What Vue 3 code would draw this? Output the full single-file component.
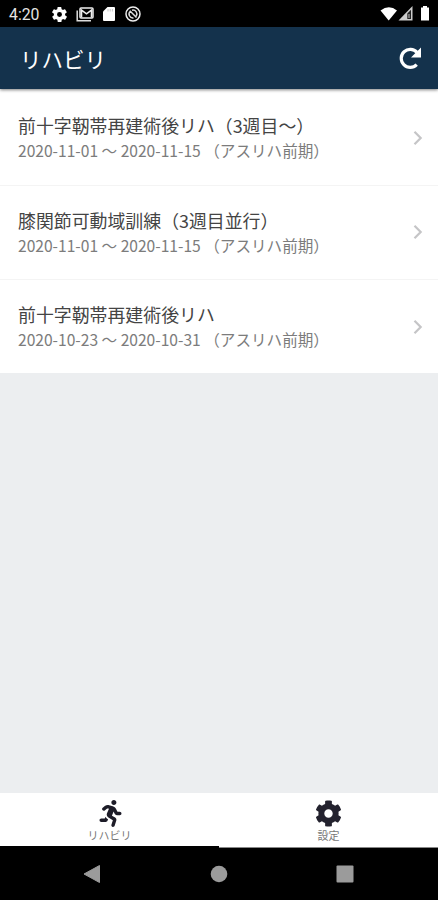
<script setup>
const plans = [
  { title: '前十字靭帯再建術後リハ（3週目〜）', from: '2020-11-01', to: '2020-11-15', phase: '（アスリハ前期）' },
  { title: '膝関節可動域訓練（3週目並行）', from: '2020-11-01', to: '2020-11-15', phase: '（アスリハ前期）' },
  { title: '前十字靭帯再建術後リハ', from: '2020-10-23', to: '2020-10-31', phase: '（アスリハ前期）' },
]
</script>

<template>
  <div class="screen">
    <div class="status">
      <span class="clock">4:20</span>
      <svg class="s-gear" viewBox="2 2 20 20"><path fill="#fff" fill-rule="evenodd" d="M19.4 13a7.5 7.5 0 0 0 0-2l2.1-1.6a.5.5 0 0 0 .1-.6l-2-3.5a.5.5 0 0 0-.6-.2l-2.5 1a7.3 7.3 0 0 0-1.7-1l-.4-2.6a.5.5 0 0 0-.5-.5h-4a.5.5 0 0 0-.5.4l-.4 2.7a7.7 7.7 0 0 0-1.7 1l-2.5-1a.5.5 0 0 0-.6.2l-2 3.5a.5.5 0 0 0 .1.6L4.6 11a7.5 7.5 0 0 0 0 2l-2.1 1.6a.5.5 0 0 0-.1.6l2 3.5c.1.2.4.3.6.2l2.5-1a7.3 7.3 0 0 0 1.7 1l.4 2.6c0 .3.2.5.5.5h4c.2 0 .5-.2.5-.4l.4-2.7a7.7 7.7 0 0 0 1.7-1l2.5 1c.2.1.5 0 .6-.2l2-3.5a.5.5 0 0 0-.1-.6zM12 15.3a3.3 3.3 0 1 1 0-6.6 3.3 3.3 0 0 1 0 6.6z"/></svg>
      <svg class="s-mail" viewBox="0 0 18 15"><path d="M1.200 3.500v10.300H15" fill="none" stroke="#ddd" stroke-width="1.500"/><rect x="4" y="1" width="13" height="10" rx="1" fill="none" stroke="#eee" stroke-width="1.500"/><path d="M5.500 10.500V3l5 3.800 5-3.800v7.500" fill="none" stroke="#eee" stroke-width="1.600"/></svg>
      <svg class="s-card" viewBox="0 0 12 14"><path d="M4.500 0H11q1 0 1 1v12q0 1-1 1H1q-1 0-1-1V4.500z" fill="#fff"/><path d="M5 2v2.500M7.200 2v2.500M9.400 2v2.500" stroke="#bbb" stroke-width=".8"/></svg>
      <svg class="s-sync" viewBox="0 0 16 16"><circle cx="8" cy="8" r="7" fill="none" stroke="#eee" stroke-width="1.500"/><path d="M5.300 5.200A3.900 3.900 0 0 0 8.500 11.900M7 4.200a3.900 3.900 0 0 1 4.300 5.800M4.800 4.800l6.700 6.700" fill="none" stroke="#ddd" stroke-width="1.500"/></svg>
      <span class="fill"></span>
      <svg class="s-right" viewBox="0 0 50 16"><path d="M.5 4.500Q9 -2 17 4.500L8.700 14.500z" fill="#fff"/><path d="M32.500 0v14.500H18.500z" fill="#ccc"/><path d="M27.300 7.500 31 3.800v9.200h-3.700z" fill="#222"/><path d="M29 8v4" stroke="#aaa" stroke-width="1.200"/><path d="M43 0h4v1.500h2V14.500h-8V1.500h2z" fill="#fff"/></svg>
    </div>
    <header class="bar">
      <h1>リハビリ</h1>
      <svg class="reload" viewBox="0 0 24 24"><path d="M18.700 18.600A9 9 0 1 1 19 6.400" fill="none" stroke="#fff" stroke-width="3.200"/><path d="M23 1.500v10H13l3.700-3.700L20 4.500z" fill="#fff"/></svg>
    </header>
    <main>
      <div class="list">
        <div v-for="(p, i) in plans" :key="i" class="row">
          <div class="info">
            <div class="title">{{ p.title }}</div>
            <div class="sub">{{ p.from }} 〜 {{ p.to }} {{ p.phase }}</div>
          </div>
          <svg class="chev" viewBox="0 0 10 16"><path d="M1.500 1.700 7.700 8l-6.200 6.300" fill="none" stroke="#c5c5c7" stroke-width="2.200"/></svg>
        </div>
      </div>
    </main>
    <nav class="tabs">
      <div class="tab active">
        <svg class="run" viewBox="0 0 416 512"><path fill="#1d1c28" d="M272 96c26.510 0 48-21.490 48-48S298.510 0 272 0s-48 21.490-48 48 21.490 48 48 48zM113.690 317.470l-14.800 34.520H32c-17.670 0-32 14.330-32 32s14.330 32 32 32h77.450c19.250 0 36.580-11.440 44.110-29.090l8.790-20.520-10.670-6.300c-17.320-10.230-30.060-25.370-37.990-42.610zM384 223.990h-44.030l-26.060-53.250c-12.500-25.550-35.450-44.230-61.780-50.940l-71.080-21.140c-28.300-6.800-57.770-.550-80.840 17.140l-39.670 30.410c-14.030 10.750-16.690 30.830-5.940 44.860s30.840 16.690 44.860 5.940l39.670-30.410c7.670-5.890 17.440-8 25.270-6.140l14.700 4.370-37.460 87.390c-12.620 29.480-1.310 64.010 26.300 80.310l84.980 50.170-27.470 87.730c-5.280 16.860 4.110 34.820 20.970 40.100 3.190 1 6.410 1.480 9.580 1.480 13.610 0 26.230-8.770 30.520-22.450l31.640-101.060c5.910-20.770-2.890-43.080-21.640-54.390l-61.240-36.140 31.310-78.280 20.270 41.430c8 16.340 24.920 26.890 43.110 26.890H384c17.670 0 32-14.330 32-32s-14.330-31.990-32-31.990z"/></svg>
        <span>リハビリ</span>
      </div>
      <div class="tab">
        <svg class="cog" viewBox="0 0 512 512"><path fill="#23222e" d="M487.400 315.700l-42.600-24.600c4.300-23.200 4.300-47 0-70.200l42.600-24.600c4.900-2.800 7.100-8.600 5.500-14-11.100-35.600-30-67.800-54.700-94.600-3.800-4.100-10-5.100-14.800-2.300L380.800 110c-17.900-15.400-38.500-27.300-60.800-35.100V25.800c0-5.600-3.900-10.500-9.400-11.700-36.700-8.200-74.300-7.800-109.200 0-5.500 1.200-9.400 6.100-9.400 11.700V75c-22.200 7.900-42.800 19.800-60.800 35.100L88.700 85.500c-4.900-2.800-11-1.900-14.800 2.300-24.700 26.700-43.600 58.900-54.700 94.600-1.700 5.400.6 11.200 5.500 14L67.300 221c-4.300 23.200-4.300 47 0 70.200l-42.600 24.600c-4.900 2.800-7.100 8.600-5.500 14 11.100 35.600 30 67.800 54.700 94.600 3.800 4.100 10 5.100 14.800 2.300l42.600-24.600c17.900 15.400 38.500 27.300 60.800 35.100v49.200c0 5.600 3.900 10.500 9.400 11.700 36.700 8.200 74.300 7.800 109.200 0 5.500-1.200 9.400-6.100 9.400-11.700v-49.200c22.200-7.900 42.800-19.800 60.800-35.100l42.600 24.600c4.900 2.800 11 1.900 14.800-2.300 24.700-26.700 43.600-58.900 54.700-94.600 1.500-5.500-.7-11.300-5.600-14.100zM256 336c-44.100 0-80-35.900-80-80s35.900-80 80-80 80 35.900 80 80-35.900 80-80 80z"/></svg>
        <span>設定</span>
      </div>
    </nav>
    <div class="sysnav">
      <svg viewBox="0 0 18 20"><path d="M1 10 16.500 1.500v17z" fill="#9b9b9b" stroke="#9b9b9b" stroke-linejoin="round"/></svg>
      <svg viewBox="0 0 18 20"><circle cx="9" cy="10" r="8.300" fill="#9b9b9b"/></svg>
      <svg viewBox="0 0 18 20"><rect x=".5" y="1.500" width="17" height="17" rx="1" fill="#9b9b9b"/></svg>
    </div>
  </div>
</template>

<style>
body { margin: 0; background: #000; }
</style>

<style scoped>
.screen {
  width: 438px;
  height: 900px;
  display: flex;
  flex-direction: column;
  background: #eceef0;
  font-family: "Noto Sans CJK JP", sans-serif;
  overflow: hidden;
}
.status {
  flex: none;
  height: 27px;
  box-sizing: border-box;
  padding: 1px 8px 0 9px;
  display: flex;
  align-items: center;
  background: #000;
  color: #e4e4e4;
}
.status svg { display: block; flex: none; }
.clock { width: 43px; font: 400 15.8px/26px Roboto, sans-serif; padding-top: 1px; }
.s-gear { width: 15px; height: 15px; margin-right: 9px; }
.s-mail { width: 18px; height: 15px; margin-right: 9px; }
.s-card { width: 12px; height: 14px; margin-right: 10px; }
.s-sync { width: 16px; height: 16px; }
.fill { flex: 1; }
.s-right { width: 50px; height: 16px; }
.bar {
  flex: none;
  height: 62px;
  box-sizing: border-box;
  padding: 0 16px 0 20px;
  display: flex;
  align-items: center;
  justify-content: space-between;
  background: #14324c;
  box-shadow: 0 1px 3px rgba(0, 0, 0, 0.5);
  z-index: 1;
}
h1 { margin: 0; padding-top: 2px; color: #fff; font-size: 21.5px; line-height: 32px; font-weight: 400; }
.reload { width: 24px; height: 24px; }
main { flex: 1; }
.list { padding-top: 2px; background: #fff; }
.row {
  height: 94.5px;
  box-sizing: border-box;
  padding: 0 15px 0 18px;
  display: flex;
  align-items: center;
  justify-content: space-between;
  border-bottom: 1px solid #f4f4f4;
}
.row:last-child { height: 93px; border-bottom: 0; }
.info { white-space: nowrap; }
.title { font-size: 17.9px; line-height: 26px; color: #444; }
.sub { font-size: 15.6px; line-height: 25px; color: #7c7c7c; }
.chev { width: 10px; height: 16px; }
.tabs { flex: none; height: 55px; display: flex; background: #fff; }
.tab {
  flex: 1;
  box-sizing: border-box;
  padding-top: 7px;
  border-bottom: 1px solid #888;
  display: flex;
  flex-direction: column;
  align-items: center;
}
.tab.active { border-bottom: 2px solid #000; }
.tab span { font-size: 11px; line-height: 16px; color: #777; }
.run { width: 23px; height: 27px; margin-left: 2px; }
.cog { width: 27px; height: 27px; }
.sysnav {
  flex: none;
  height: 52px;
  box-sizing: border-box;
  padding: 0 84px 0 83px;
  background: #000;
  display: flex;
  align-items: center;
  justify-content: space-between;
}
.sysnav svg { width: 18px; height: 20px; }
</style>
